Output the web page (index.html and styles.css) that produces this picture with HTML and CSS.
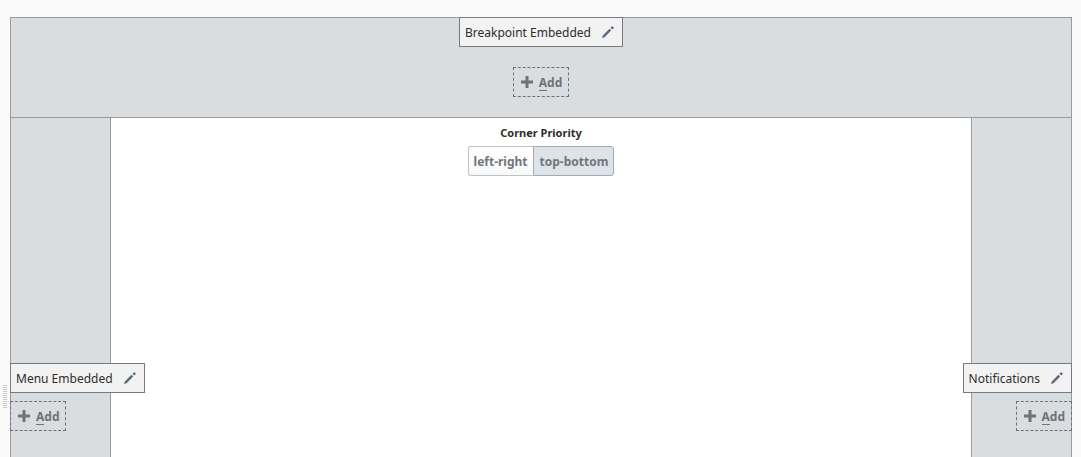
FILE: index.html
```html
<!DOCTYPE html>
<html lang="en">
<head>
    <meta charset="UTF-8">
    <meta name="viewport" content="width=device-width, initial-scale=1.0">
    <title>Docks</title>
    <link rel="stylesheet" href="styles.css">
</head>
<body>
    <svg class="sprite" aria-hidden="true">
        <symbol id="pencil" viewBox="0 0 12 12">
            <path d="M0 12 L0.8 9.4 L7.4 2.8 L9.2 4.6 L2.6 11.2 Z M8.4 1.8 L9.8 0.4 Q10.3 0 10.8 0.4 L11.6 1.2 Q12 1.7 11.6 2.2 L10.2 3.6 Z"/>
        </symbol>
        <symbol id="plus" viewBox="0 0 12 12">
            <path d="M4.5 0 H7.5 V4.5 H12 V7.5 H7.5 V12 H4.5 V7.5 H0 V4.5 H4.5 Z"/>
        </symbol>
    </svg>

    <div class="page">
        <div class="splitter"><span class="grip"></span></div>
        <main class="docks">
            <section class="dock dock-top">
                <div class="dock-title">
                    <span class="text">Breakpoint Embedded</span>
                    <button type="button" class="edit" aria-label="Edit Breakpoint Embedded"><svg><use href="#pencil"/></svg></button>
                </div>
                <button type="button" class="add"><svg><use href="#plus"/></svg><span class="text"><span class="key">A</span>dd</span></button>
            </section>
            <div class="middle">
                <section class="dock dock-left">
                    <div class="dock-title">
                        <span class="text">Menu Embedded</span>
                        <button type="button" class="edit" aria-label="Edit Menu Embedded"><svg><use href="#pencil"/></svg></button>
                    </div>
                    <button type="button" class="add"><svg><use href="#plus"/></svg><span class="text"><span class="key">A</span>dd</span></button>
                </section>
                <fieldset class="center">
                    <legend>Corner Priority</legend>
                    <div class="toggle">
                        <input type="radio" name="corner" id="left-right">
                        <label for="left-right">left-right</label>
                        <input type="radio" name="corner" id="top-bottom" checked>
                        <label for="top-bottom">top-bottom</label>
                    </div>
                </fieldset>
                <section class="dock dock-right">
                    <div class="dock-title">
                        <span class="text">Notifications</span>
                        <button type="button" class="edit" aria-label="Edit Notifications"><svg><use href="#pencil"/></svg></button>
                    </div>
                    <button type="button" class="add"><svg><use href="#plus"/></svg><span class="text"><span class="key">A</span>dd</span></button>
                </section>
            </div>
        </main>
    </div>
</body>
</html>
```

FILE: styles.css
```css
* {
    box-sizing: border-box;
}
body {
    margin: 0;
    background: #fafafa;
    color: #2d2d2d;
    font-family: "Noto Sans", sans-serif;
    font-size: 12px;
    line-height: 16px;
}
button {
    font: inherit;
    cursor: pointer;
}
.sprite {
    display: none;
}
.page {
    display: flex;
    height: 100vh;
    overflow: hidden;
    padding: 17px 9px 0 0;
}
.splitter {
    width: 10px;
    padding: 368px 3px 0;
}
.grip {
    display: block;
    height: 24px;
    background: repeating-linear-gradient(#c8c8c8 0 1px, transparent 1px 2px);
}
.docks {
    display: flex;
    flex-direction: column;
    flex: 1;
    border: 1px solid #999c9f;
    border-bottom: none;
}

/* docks */
.dock {
    display: flex;
    flex-direction: column;
    background: #d9dddf;
}
.dock-top {
    height: 100px;
    align-items: center;
    gap: 20px;
    border-bottom: 1px solid #999c9f;
}
.dock-top .dock-title {
    margin-top: -1px;
}
.middle {
    display: grid;
    grid-template-columns: 100px 1fr 100px;
    flex: 1;
}
.dock-left,
.dock-right {
    padding-top: 245px;
    gap: 8px;
}
.dock-left {
    align-items: flex-start;
    margin-left: -1px;
    border-left: 1px solid #999c9f;
    border-right: 1px solid #999c9f;
}
.dock-right {
    align-items: flex-end;
    margin-right: -1px;
    border-left: 1px solid #999c9f;
    border-right: 1px solid #999c9f;
}
.dock-left > * {
    margin-left: -1px;
}
.dock-right > * {
    margin-right: -1px;
}
.dock-title {
    display: flex;
    align-items: center;
    height: 30px;
    padding-left: 5px;
    gap: 3px;
    background: #f2f2f2;
    border: 1px solid #7a7a7d;
    white-space: nowrap;
    z-index: 1;
}
.text {
    padding-top: 2px;
}
.edit {
    display: flex;
    align-items: center;
    justify-content: center;
    width: 28px;
    height: 28px;
    padding: 0;
    border: none;
    background: none;
}
.edit svg {
    width: 12px;
    height: 12px;
    fill: #5b6e7f;
}
.add {
    display: flex;
    align-items: center;
    gap: 6px;
    height: 30px;
    padding: 0 6px 0 7px;
    border: 1px dashed #6f7378;
    background: none;
    color: #6f7378;
    font-weight: bold;
}
.add svg {
    width: 12px;
    height: 12px;
    fill: #6f7378;
}
.key {
    display: inline-block;
    line-height: 14px;
    border-bottom: 1px solid #6f7378;
}

/* corner priority */
.center {
    display: flex;
    flex-direction: column;
    align-items: center;
    min-width: 0;
    margin: 0;
    padding: 7px 0 0;
    border: none;
    background: #fff;
}
.center legend {
    float: left;
    padding: 0;
    margin-bottom: 5px;
    font-size: 11px;
    font-weight: bold;
}
.toggle {
    display: flex;
    position: relative;
}
.toggle input {
    position: absolute;
    opacity: 0;
    margin: 0;
}
.toggle label {
    height: 30px;
    padding: 7px 5px;
    border: 1px solid #c0c3c5;
    border-right: none;
    border-radius: 3px 0 0 3px;
    background: linear-gradient(#fff, #f7f9fa);
    color: #72767b;
    font-weight: bold;
    cursor: pointer;
}
.toggle label:last-child {
    padding-left: 6px;
    border-right: 1px solid #c0c3c5;
    border-radius: 0 3px 3px 0;
}
.toggle input:checked + label {
    border-color: #a5abb1;
    background: #dce3e9;
}
```
